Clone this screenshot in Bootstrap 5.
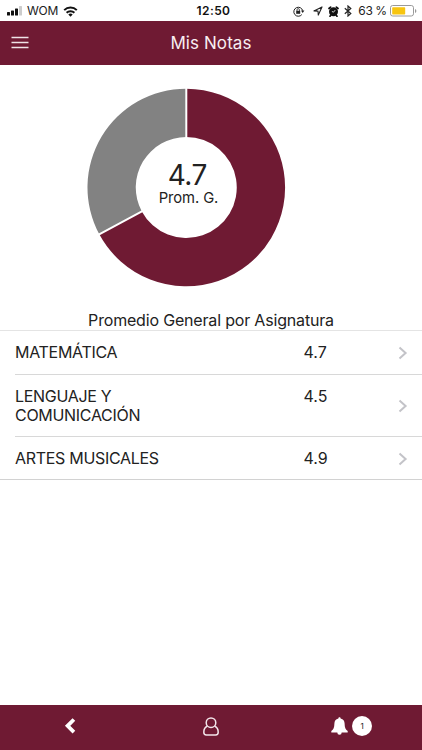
<!DOCTYPE html>
<html lang="es">
<head>
<meta charset="utf-8">
<meta name="viewport" content="width=device-width, initial-scale=1">
<title>Mis Notas</title>
<link href="https://cdn.jsdelivr.net/npm/bootstrap@5.3.0/dist/css/bootstrap.min.css" rel="stylesheet">
<style>
:root{--wine:#6f1a33}
body{font-family:Inter,"Liberation Sans",sans-serif;color:#222;font-size:16px;line-height:19px;height:750px;overflow:hidden}
svg{display:block;flex:none}
.thirds{grid-template-columns:1fr auto 1fr}
.status{height:21px;padding:1px 5px 0 7px;font-size:12px;line-height:20px;color:#222}
.carrier{letter-spacing:-.3px}
.battery-text{margin:0 3px 0 6px}
.clock{font-weight:600;font-size:12px;letter-spacing:.4px;color:#111;padding-left:3px}
.topbar,.tabs{background:var(--wine);color:#fff}
.topbar{height:44px;padding:0 11px}
.topbar h1{font-size:17px;font-weight:400;line-height:22px;letter-spacing:.08px;color:#f8eef2}
.chart{height:246px;padding:22px 0 0 86px}
.subtitle{height:19px;white-space:nowrap;letter-spacing:-.18px}
.subjects{border-top:1px solid #e4e4e4;border-bottom:1px solid #d2d2d2}
.subject{margin-left:15px;padding:12px 14px 12px 0;border-bottom:1px solid #d8d8d8}
.subject:nth-child(2){padding-bottom:11px}
.subject:last-child{border-bottom:0;padding-bottom:11px}
.subject-name{width:288.5px;padding-right:120px;letter-spacing:-.3px}
.tabs{height:45px;padding-bottom:3px}
.pill{width:20px;height:20px;background:#fff;color:#222;font-size:8px;line-height:20px}
</style>
</head>
<body class="bg-white d-flex flex-column">
<header>
  <div class="status thirds d-grid align-items-center">
    <div class="d-flex align-items-center">
      <svg width="16" height="10" viewBox="0 0 16 10"><g fill="#111"><rect y="6" width="3" height="3.5" rx=".6"/><rect x="4" y="4.5" width="3" height="5" rx=".6"/><rect x="8" y="2.5" width="3" height="7" rx=".6"/></g><rect x="12" y="0" width="3" height="9.5" rx=".6" fill="#ccc"/></svg>
      <span class="carrier ms-1">WOM</span>
      <svg class="ms-1 me-1" width="14" height="11" viewBox="0 0 14 11" overflow="visible"><g transform="translate(1.5)"><g fill="none" stroke="#111" stroke-width="2"><path d="M.7 4.1a9 9 0 0 1 12.6 0"/><path d="M3.1 6.8a5.5 5.5 0 0 1 7.8 0"/></g><path d="M4.8 8.5a3.1 3.1 0 0 1 4.4 0L7 10.7z" fill="#111"/></g></svg>
    </div>
    <span class="clock">12:50</span>
    <div class="d-flex align-items-center justify-content-end">
      <svg width="12" height="11" viewBox="0 0 12 11"><path d="M8.8 8.6A4.5 4.5 0 1 1 9.7 4.7" fill="none" stroke="#222"/><path d="M8 4.6h3.4L9.7 7z" fill="#222"/><rect x="3.2" y="4.8" width="4" height="3" fill="#222"/><path d="M4 5V3.8a1.2 1.2 0 0 1 2.4 0V5" fill="none" stroke="#222" stroke-width=".8"/></svg>
      <svg class="ms-2" width="10" height="10" viewBox="0 0 10 10"><path d="M.9 4.9 9 .9 5.3 9.1 5 5.1z" fill="none" stroke="#222" stroke-width="1.1" stroke-linejoin="round"/></svg>
      <svg class="ms-1 me-1" width="13" height="11" viewBox="-1 0 13 11"><circle cx="5.5" cy="5.8" r="4.5" fill="#111"/><path d="M1 2.5 2.6 1.1M10 2.5 8.4 1.1M2.6 9.4l-.6.8M8.4 9.4l.6.8" stroke="#111" stroke-width="1.7" stroke-linecap="round"/><path d="M5.5 6.2 7.2 4.1M5.5 6.2 3.9 5.4" stroke="#fff" stroke-width=".8"/></svg>
      <svg width="8" height="12" viewBox="0 0 8 12"><path d="M.8 3.2 6.8 8.5 4 11V1L6.8 3.5.8 8.8" fill="none" stroke="#222" stroke-width="1.2"/></svg>
      <span class="battery-text">63&thinsp;%</span>
      <svg width="27" height="12" viewBox="0 0 27 12"><rect x=".5" y=".5" width="23" height="10.5" rx="2.2" fill="#fff" stroke="#999"/><rect x="2.2" y="2.2" width="13" height="7.2" rx=".7" fill="#f7c510"/><path d="M25 4v4q1.4-.6 1.4-2T25 4" fill="#999"/></svg>
    </div>
  </div>
  <nav class="topbar thirds d-grid align-items-center">
    <svg width="18" height="14" viewBox="0 0 18 14"><path d="M.5 1.5h17M.5 6.5h17M.5 11.5h17" stroke="#efe3e7" stroke-width="1.5"/></svg>
    <h1 class="m-0">Mis Notas</h1>
  </nav>
</header>
<main class="flex-grow-1">
  <div class="chart">
    <svg width="201" height="201" viewBox="-100.3 -100.5 201 201">
      <path fill="#6f1a33" d="M0-98.8A98.8 98.8 0 1 1-87 46.85L-44.5 23.95A50.5 50.5 0 1 0 0-50.5z"/>
      <path fill="#828282" d="M0-98.8A98.8 98.8 0 0 0-87 46.85L-44.5 23.95A50.5 50.5 0 0 1 0-50.5z"/>
      <path d="M0-101V-49M-89 47.93-43 23.16" stroke="#fff" stroke-width="2"/>
      <g text-anchor="middle" fill="#222"><text x="1" y="-3" font-size="28" letter-spacing="-.5">4.7</text><text x="2.2" y="15.5" font-size="14.8" letter-spacing="-.1">Prom. G.</text></g>
    </svg>
  </div>
  <div class="subtitle text-center">Promedio General por Asignatura</div>
  <div class="subjects">
    <div class="subject d-flex"><div class="subject-name">MATEMÁTICA</div><div>4.7</div><svg class="ms-auto align-self-center" width="10" height="14" viewBox="0 0 10 14"><path d="M1.5 1.6 7.6 7l-6.1 5.4" fill="none" stroke="#c3c3c8" stroke-width="2"/></svg></div>
    <div class="subject d-flex"><div class="subject-name">LENGUAJE Y COMUNICACIÓN</div><div>4.5</div><svg class="ms-auto align-self-center" width="10" height="14" viewBox="0 0 10 14"><path d="M1.5 1.6 7.6 7l-6.1 5.4" fill="none" stroke="#c3c3c8" stroke-width="2"/></svg></div>
    <div class="subject d-flex"><div class="subject-name">ARTES MUSICALES</div><div>4.9</div><svg class="ms-auto align-self-center" width="10" height="14" viewBox="0 0 10 14"><path d="M1.5 1.6 7.6 7l-6.1 5.4" fill="none" stroke="#c3c3c8" stroke-width="2"/></svg></div>
  </div>
</main>
<footer class="tabs row g-0 align-items-center">
  <div class="col-4 d-flex justify-content-center"><svg width="12" height="18" viewBox="-.6 -.5 12 18"><path d="M9.3 2 3 8.3l6.3 6.3" fill="none" stroke="#fff" stroke-width="3.8"/></svg></div>
  <div class="col-4 d-flex justify-content-center"><svg width="16" height="19" viewBox="0 0 16 19"><g fill="none" stroke="#f3e5ea" stroke-width="1.5"><circle cx="8" cy="5.7" r="4.8"/><path d="M4.4 9C1.8 10.2.8 12 .8 15.2c0 1.8.9 2.7 2.6 2.7h9.2c1.7 0 2.6-.9 2.6-2.7 0-3.2-1-5-3.6-6.2"/></g></svg></div>
  <div class="col-4 d-flex justify-content-center align-items-center gap-1"><svg width="17" height="18" viewBox="0 0 17 18"><path fill="#fff" d="M8.5.3c.7 0 1.1.5 1.1 1.2 2.8.6 3.9 2.6 4 5.1.1 4 .8 6 3.1 7.3V15.500H.3v-1.600c2.3-1.3 3-3.300 3.100-7.300.1-2.500 1.200-4.500 4-5.100 0-.7.4-1.200 1.100-1.200zM6.300 15.500h4.400a2.200 2.200 0 0 1-4.400 0"/></svg><span class="pill rounded-circle text-center">1</span></div>
</footer>
<script src="https://cdn.jsdelivr.net/npm/bootstrap@5.3.0/dist/js/bootstrap.bundle.min.js"></script>
</body>
</html>
